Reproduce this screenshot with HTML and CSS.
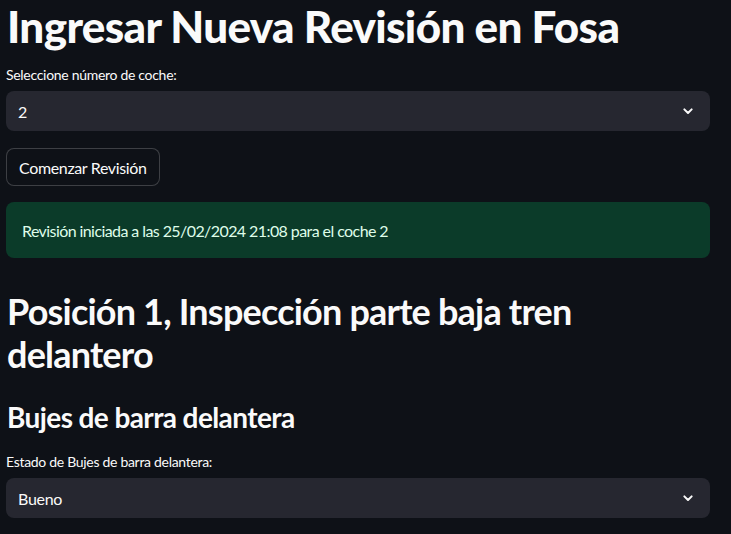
FILE: index.html
```html
<!DOCTYPE html>
<html lang="es">
<head>
<meta charset="utf-8">
<title>Ingresar Nueva Revisión en Fosa</title>
<link rel="stylesheet" href="styles.css">
</head>
<body>
<main class="main">
  <h1 class="title">Ingresar Nueva Revisión en Fosa</h1>

  <div class="field">
    <label class="label">Seleccione número de coche:</label>
    <div class="select">
      <span class="select-value">2</span>
      <svg class="chevron" width="16" height="16" viewBox="0 0 24 24"><path d="M6.5 9.5l5.5 5.5 5.5-5.5" fill="none" stroke="#fafafa" stroke-width="3" stroke-linecap="round" stroke-linejoin="round"/></svg>
    </div>
  </div>

  <button class="button">Comenzar Revisión</button>

  <div class="alert">Revisión iniciada a las 25/02/2024 21:08 para el coche 2</div>

  <h2 class="h2">Posición 1, Inspección parte baja tren delantero</h2>

  <h3 class="h3">Bujes de barra delantera</h3>

  <div class="field">
    <label class="label">Estado de Bujes de barra delantera:</label>
    <div class="select">
      <span class="select-value">Bueno</span>
      <svg class="chevron" width="16" height="16" viewBox="0 0 24 24"><path d="M6.5 9.5l5.5 5.5 5.5-5.5" fill="none" stroke="#fafafa" stroke-width="3" stroke-linecap="round" stroke-linejoin="round"/></svg>
    </div>
  </div>
</main>
</body>
</html>
```
FILE: styles.css
```css
html, body {
  margin: 0;
  padding: 0;
  background: #0e1117;
  color: #fafafa;
  font-family: "Lato", "Noto Sans", sans-serif;
}

.main {
  width: 704px;
  padding: 0 21px 0 6px;
  display: flex;
  flex-direction: column;
}

.title {
  margin: 0 0 0 1px;
  font-size: 44px;
  font-weight: 900;
  line-height: 53px;
  padding: 0 0 12px;
  letter-spacing: -0.65px;
}

.field {
  display: flex;
  flex-direction: column;
}

.label {
  font-size: 14px;
  line-height: 20px;
  padding-bottom: 6px;
  letter-spacing: -0.3px;
}

.select {
  height: 40px;
  background: #262730;
  border-radius: 8px;
  display: flex;
  align-items: center;
  justify-content: space-between;
  padding: 0 14px 0 12px;
}

.select-value {
  font-size: 16px;
  letter-spacing: -0.3px;
}

.chevron {
  display: block;
}

.button {
  align-self: flex-start;
  margin-top: 17px;
  height: 38px;
  padding: 0 12px;
  background: #0e1117;
  color: #fafafa;
  border: 1px solid rgba(250, 250, 250, 0.2);
  border-radius: 8px;
  font-family: inherit;
  font-size: 16px;
  letter-spacing: -0.35px;
}

.alert {
  margin-top: 16px;
  height: 56px;
  display: flex;
  align-items: center;
  padding: 0 16px;
  background: #0b3b29;
  color: #dffde9;
  border-radius: 8px;
  font-size: 16px;
  letter-spacing: -0.58px;
}

.h2 {
  margin: 0 0 0 1px;
  padding: 32px 0 14px;
  font-size: 36px;
  font-weight: 700;
  line-height: 43px;
  letter-spacing: -0.8px;
}

.h3 {
  margin: 0 0 0 1px;
  padding: 10px 0 18px;
  font-size: 28px;
  font-weight: 700;
  line-height: 34px;
  letter-spacing: -0.6px;
}
```
